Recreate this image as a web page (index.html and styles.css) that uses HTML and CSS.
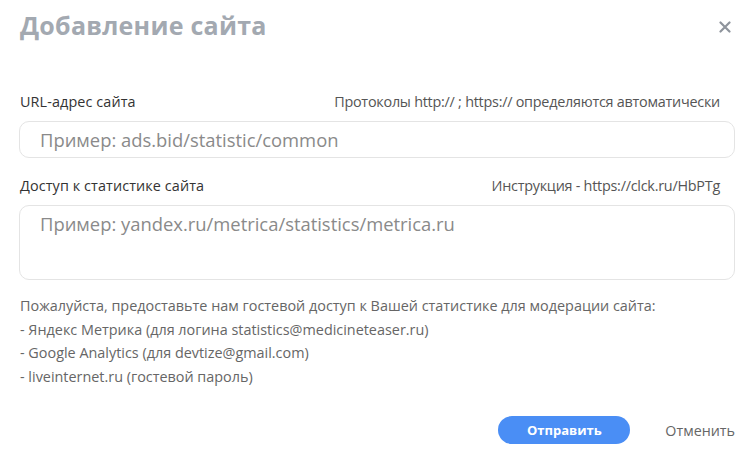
FILE: index.html
```html
<!DOCTYPE html>
<html lang="ru">
<head>
<meta charset="utf-8">
<link rel="stylesheet" href="styles.css">
</head>
<body>
<div class="modal">
  <div class="header">
    <h1 class="title">Добавление сайта</h1>
    <button class="close" aria-label="Закрыть">
      <svg width="12" height="12" viewBox="0 0 12 12"><path d="M1.5 1.5 L10.5 10.5 M10.5 1.5 L1.5 10.5" stroke="#8e949c" stroke-width="2.2" stroke-linecap="round"/></svg>
    </button>
  </div>
  <div class="field field-url">
    <div class="label-row">
      <span class="label">URL-адрес сайта</span>
      <span class="hint">Протоколы http:// ; https:// определяются автоматически</span>
    </div>
    <div class="input">Пример: ads.bid/statistic/common</div>
  </div>
  <div class="field field-stat">
    <div class="label-row">
      <span class="label">Доступ к статистике сайта</span>
      <span class="hint">Инструкция - https://clck.ru/HbPTg</span>
    </div>
    <div class="input textarea">Пример: yandex.ru/metrica/statistics/metrica.ru</div>
  </div>
  <div class="info">
    <p>Пожалуйста, предоставьте нам гостевой доступ к Вашей статистике для модерации сайта:</p>
    <p>- Яндекс Метрика (для логина statistics@medicineteaser.ru)</p>
    <p>- Google Analytics (для devtize@gmail.com)</p>
    <p>- liveinternet.ru (гостевой пароль)</p>
  </div>
  <div class="actions">
    <button class="btn-submit">Отправить</button>
    <button class="btn-cancel">Отменить</button>
  </div>
</div>
</body>
</html>
```
FILE: styles.css
```css
html, body {
  margin: 0;
  padding: 0;
  background: #ffffff;
}
body {
  font-family: "Open Sans", "Noto Sans", sans-serif;
  color: #333;
}
.modal {
  width: 750px;
  height: 454px;
  box-sizing: border-box;
  padding: 0 15px 0 19px;
}
.header {
  display: flex;
  justify-content: space-between;
  align-items: center;
  height: 50px;
  padding-right: 4px;
}
.title {
  margin: 0;
  font-size: 25px;
  font-weight: 700;
  color: #a3a9b1;
  letter-spacing: 0.25px;
  line-height: 1;
  padding-left: 1px;
}
.close {
  border: 0;
  background: none;
  padding: 0;
  width: 12px;
  height: 12px;
  display: flex;
  margin-top: 3px;
}
.field-url {
  margin-top: 42px;
}
.field-stat {
  margin-top: 18px;
}
.label-row {
  display: flex;
  justify-content: space-between;
  align-items: baseline;
  font-size: 14.4px;
  line-height: 20px;
  padding-right: 15px;
  margin-bottom: 9px;
}
.label {
  color: #333;
  padding-left: 1px;
  letter-spacing: 0.1px;
}
.hint {
  color: #555;
  letter-spacing: -0.25px;
}
.input {
  box-sizing: border-box;
  width: 716px;
  height: 37px;
  border: 1px solid #e4e4e4;
  border-radius: 10px;
  padding: 0 20px;
  display: flex;
  align-items: center;
  font-size: 18.4px;
  color: #8a8a8a;
}
.textarea {
  height: 75px;
  align-items: flex-start;
  padding-top: 5px;
}
.info {
  margin-top: 14px;
  font-size: 14.4px;
  color: #666;
  padding-left: 1px;
}
.info p {
  margin: 0;
  line-height: 23.5px;
}
.actions {
  display: flex;
  justify-content: flex-end;
  align-items: center;
  margin-top: 28px;
  gap: 35px;
}
.btn-submit {
  width: 132px;
  height: 28px;
  border: 0;
  border-radius: 14px;
  background: #4a8ef5;
  color: #fff;
  font-family: inherit;
  font-weight: 700;
  font-size: 13px;
}
.btn-cancel {
  border: 0;
  background: none;
  padding: 0;
  font-family: inherit;
  font-size: 14.3px;
  color: #666;
}
```
